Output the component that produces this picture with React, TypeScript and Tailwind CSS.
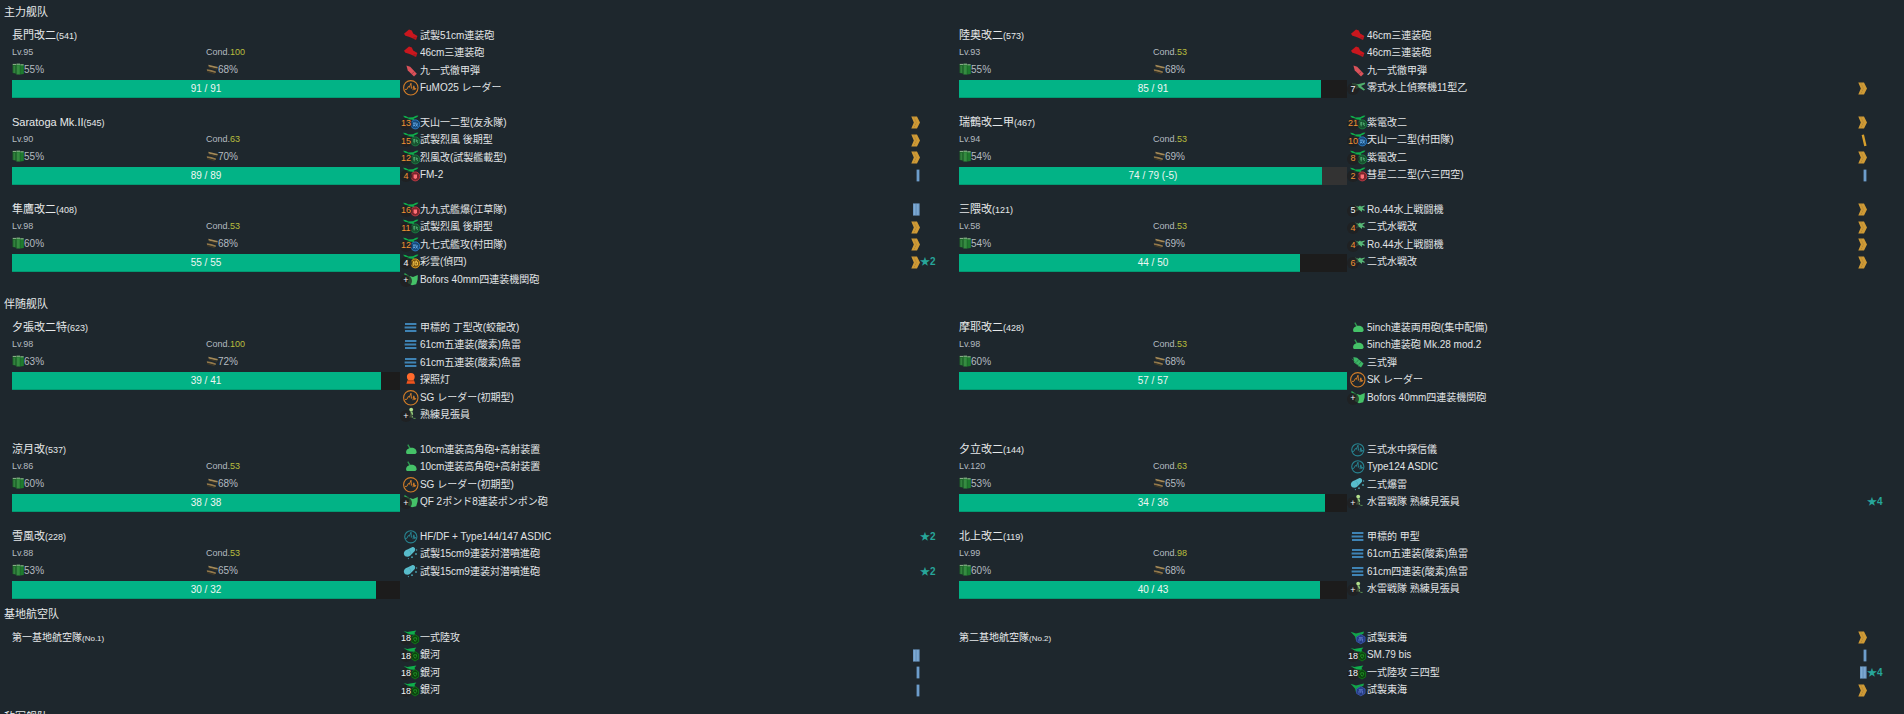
import React from 'react';

type IconKind =
  | 'gun' | 'shell' | 'radar' | 'sonar' | 'torpedo' | 'light' | 'lookout' | 'dome' | 'aa' | 'sanshiki'
  | 'charge' | 'seaplane' | 'seafighter' | 'fighter' | 'attacker' | 'bomber' | 'recon' | 'land' | 'patrol';

type Prof = 'chevron' | 'slash' | 'one' | 'two';

interface Equip {
  icon: IconKind;
  name: string;
  badge?: string;
  low?: boolean;
  prof?: Prof;
  stars?: number;
}

interface Ship {
  name: string;
  id: string;
  lv: number;
  cond: number;
  fuel: number;
  ammo: number;
  hp: number;
  max: number;
  lost?: number;
  equips: Equip[];
}

const e = (icon: IconKind, name: string, badge?: string, low?: boolean, prof?: Prof, stars?: number): Equip => ({
  icon, name, badge, low, prof, stars,
});

const mainFleet: Ship[] = [
  {
    name: '長門改二', id: '541', lv: 95, cond: 100, fuel: 55, ammo: 68, hp: 91, max: 91,
    equips: [e('gun', '試製51cm連装砲'), e('gun', '46cm三連装砲'), e('shell', '九一式徹甲弾'), e('radar', 'FuMO25 レーダー')],
  },
  {
    name: '陸奥改二', id: '573', lv: 93, cond: 53, fuel: 55, ammo: 68, hp: 85, max: 91,
    equips: [e('gun', '46cm三連装砲'), e('gun', '46cm三連装砲'), e('shell', '九一式徹甲弾'), e('seaplane', '零式水上偵察機11型乙', '7', false, 'chevron')],
  },
  {
    name: 'Saratoga Mk.II', id: '545', lv: 90, cond: 63, fuel: 55, ammo: 70, hp: 89, max: 89,
    equips: [
      e('attacker', '天山一二型(友永隊)', '13', true, 'chevron'),
      e('fighter', '試製烈風 後期型', '15', true, 'chevron'),
      e('fighter', '烈風改(試製艦載型)', '12', true, 'chevron'),
      e('bomber', 'FM-2', '4', true, 'one'),
    ],
  },
  {
    name: '瑞鶴改二甲', id: '467', lv: 94, cond: 53, fuel: 54, ammo: 69, hp: 74, max: 79, lost: 5,
    equips: [
      e('fighter', '紫電改二', '21', true, 'chevron'),
      e('attacker', '天山一二型(村田隊)', '10', true, 'slash'),
      e('fighter', '紫電改二', '8', true, 'chevron'),
      e('bomber', '彗星二二型(六三四空)', '2', true, 'one'),
    ],
  },
  {
    name: '隼鷹改二', id: '408', lv: 98, cond: 53, fuel: 60, ammo: 68, hp: 55, max: 55,
    equips: [
      e('bomber', '九九式艦爆(江草隊)', '16', true, 'two'),
      e('fighter', '試製烈風 後期型', '11', true, 'chevron'),
      e('attacker', '九七式艦攻(村田隊)', '12', true, 'chevron'),
      e('recon', '彩雲(偵四)', '4', false, 'chevron', 2),
      e('aa', 'Bofors 40mm四連装機関砲', '+'),
    ],
  },
  {
    name: '三隈改', id: '121', lv: 58, cond: 53, fuel: 54, ammo: 69, hp: 44, max: 50,
    equips: [
      e('seafighter', 'Ro.44水上戦闘機', '5', false, 'chevron'),
      e('seafighter', '二式水戦改', '4', true, 'chevron'),
      e('seafighter', 'Ro.44水上戦闘機', '4', true, 'chevron'),
      e('seafighter', '二式水戦改', '6', true, 'chevron'),
    ],
  },
];

const escortFleet: Ship[] = [
  {
    name: '夕張改二特', id: '623', lv: 98, cond: 100, fuel: 63, ammo: 72, hp: 39, max: 41,
    equips: [
      e('torpedo', '甲標的 丁型改(蛟龍改)'),
      e('torpedo', '61cm五連装(酸素)魚雷'),
      e('torpedo', '61cm五連装(酸素)魚雷'),
      e('light', '探照灯'),
      e('radar', 'SG レーダー(初期型)'),
      e('lookout', '熟練見張員', '+'),
    ],
  },
  {
    name: '摩耶改二', id: '428', lv: 98, cond: 53, fuel: 60, ammo: 68, hp: 57, max: 57,
    equips: [
      e('dome', '5inch連装両用砲(集中配備)'),
      e('dome', '5inch連装砲 Mk.28 mod.2'),
      e('sanshiki', '三式弾'),
      e('radar', 'SK レーダー'),
      e('aa', 'Bofors 40mm四連装機関砲', '+'),
    ],
  },
  {
    name: '涼月改', id: '537', lv: 86, cond: 53, fuel: 60, ammo: 68, hp: 38, max: 38,
    equips: [
      e('dome', '10cm連装高角砲+高射装置'),
      e('dome', '10cm連装高角砲+高射装置'),
      e('radar', 'SG レーダー(初期型)'),
      e('aa', 'QF 2ポンド8連装ポンポン砲', '+'),
    ],
  },
  {
    name: '夕立改二', id: '144', lv: 120, cond: 63, fuel: 53, ammo: 65, hp: 34, max: 36,
    equips: [
      e('sonar', '三式水中探信儀'),
      e('sonar', 'Type124 ASDIC'),
      e('charge', '二式爆雷'),
      e('lookout', '水雷戦隊 熟練見張員', '+', false, undefined, 4),
    ],
  },
  {
    name: '雪風改', id: '228', lv: 88, cond: 53, fuel: 53, ammo: 65, hp: 30, max: 32,
    equips: [
      e('sonar', 'HF/DF + Type144/147 ASDIC', undefined, false, undefined, 2),
      e('charge', '試製15cm9連装対潜噴進砲'),
      e('charge', '試製15cm9連装対潜噴進砲', undefined, false, undefined, 2),
    ],
  },
  {
    name: '北上改二', id: '119', lv: 99, cond: 98, fuel: 60, ammo: 68, hp: 40, max: 43,
    equips: [
      e('torpedo', '甲標的 甲型'),
      e('torpedo', '61cm五連装(酸素)魚雷'),
      e('torpedo', '61cm四連装(酸素)魚雷'),
      e('lookout', '水雷戦隊 熟練見張員', '+'),
    ],
  },
];

const airbases = [
  {
    name: '第一基地航空隊', id: 'No.1',
    equips: [
      e('land', '一式陸攻', '18'),
      e('land', '銀河', '18', false, 'two'),
      e('land', '銀河', '18', false, 'one'),
      e('land', '銀河', '18', false, 'one'),
    ],
  },
  {
    name: '第二基地航空隊', id: 'No.2',
    equips: [
      e('patrol', '試製東海', undefined, false, 'chevron'),
      e('land', 'SM.79 bis', '18', false, 'one'),
      e('land', '一式陸攻 三四型', '18', false, 'two', 4),
      e('patrol', '試製東海', undefined, false, 'chevron'),
    ],
  },
];

const Plane = () => (
  <path d="M1 1.8 L3.6 2 L6.4 3.4 L11 3.2 L14 1.8 L16.4 1.6 L15.4 3 L11.6 4.8 L12.4 6.2 L9 5.6 L5 6.6 L5.8 4.8 L2.6 3.4 Z" fill="#0fae4c" />
);

const Disc = ({ ring, fill, mark }: { ring: string; fill: string; mark: React.ReactNode }) => (
  <>
    <Plane />
    <circle cx="13.3" cy="10.4" r="4.5" fill={fill} stroke={ring} strokeWidth="0.9" />
    {mark}
  </>
);

const Scope = ({ color, r }: { color: string; r: number }) => (
  <g fill="none" stroke={color}>
    <circle cx="8.8" cy="8.8" r={r} strokeWidth="1.1" />
    <path d="M3 10.4 H4.8 L6.4 7.4 L7.2 8.4 L9 4.2 L9.4 9.4 L10 8.6 M11 11.2 L11.8 6.8 L12.8 10.8 L13.4 9.2 L14.2 10" strokeWidth="1" strokeLinejoin="bevel" />
  </g>
);

function drawing(kind: IconKind) {
  switch (kind) {
    case 'gun':
      return (
        <>
          <path d="M2 6.8 L7 2.6 L9.8 3.4 L11.2 6.6 L15.4 9 L14 13 L9.4 10.8 L6 9.6 L3.4 8.8 Z" fill="#c9171e" />
          <path d="M11.6 10.4 L15 11 M11 11.2 L14.2 12.6" stroke="#7d1a20" strokeWidth="0.5" />
        </>
      );
    case 'shell':
      return (
        <>
          <path d="M4.4 3.4 L8.2 4.8 L14.8 11.8 L12 14.6 L5.8 8.4 Z" fill="#d9525a" />
          <path d="M10 11.8 L12.4 9.4" stroke="#8f2f37" strokeWidth="0.7" />
        </>
      );
    case 'radar':
      return <Scope color="#d07c28" r={7.2} />;
    case 'sonar':
      return <Scope color="#27828f" r={6.1} />;
    case 'torpedo':
      return <path d="M3 5 H14.4 M2.6 8.5 H14.2 M3 12 H14.4" stroke="#3f83b4" strokeWidth="1.9" fill="none" />;
    case 'light':
      return (
        <>
          <circle cx="8.8" cy="5.8" r="3.9" fill="#ff6a2c" />
          <path d="M5.6 9.2 H12 L13.2 12.8 H4.4 Z" fill="#f2551d" />
          <path d="M6 9.9 H11.6" stroke="#8f3a1c" strokeWidth="0.6" />
        </>
      );
    case 'lookout':
      return (
        <>
          <circle cx="9.2" cy="3.6" r="1.9" fill="#b4e08c" />
          <path d="M8.2 5.6 H10.4 L11.2 8.2 L10 9.4 L11.4 11.6 H7 L8.2 8.8 Z" fill="#8fc878" />
          <path d="M11.4 12.4 H13.6" stroke="#5a8f52" strokeWidth="1" />
        </>
      );
    case 'dome':
      return (
        <>
          <path d="M5.8 3.6 L8 7.4" stroke="#2f9a50" strokeWidth="1.3" />
          <path d="M4.2 12 C3.6 9.6 5.6 7.2 9 6.8 C12.4 6.6 14.8 8.6 14.6 11.8 L13.4 13 H4.8 Z" fill="#45c268" />
        </>
      );
    case 'aa':
      return (
        <>
          <path d="M2.4 2.6 L9 7" stroke="#2fa653" strokeWidth="1.5" />
          <path d="M7.8 5 L11 6 L15.8 4 L15.6 8.6 L14.2 13.2 L10 14.2 L5.6 12 L7.2 8.6 Z" fill="#45c268" />
        </>
      );
    case 'sanshiki':
      return (
        <>
          <path d="M4.4 3 L8 3.8 L14.6 9.6 L12 13.6 L5 8.6 Z" fill="#3cb566" />
          <path d="M3 4.8 L10.6 13.2" stroke="#2c7f48" strokeWidth="1" strokeDasharray="1.4 1" />
          <path d="M7.4 8.4 L9.6 5.6 M9.8 10.6 L12 7.8" stroke="#23633a" strokeWidth="0.6" />
        </>
      );
    case 'charge':
      return (
        <>
          <path d="M2 9.4 C1.4 6.8 3.8 5 5.4 4.6 L10 2.2 C12.4 1.6 14 4.2 12.8 6 L8.4 10.4 C6.2 12.4 2.8 12 2 9.4 Z" fill="#58bccb" />
          <path d="M6.4 4.8 C7.8 5.4 9 7 8.6 9.4" stroke="#3c93a3" strokeWidth="0.4" fill="none" />
          <g fill="#4aa3b3">
            <circle cx="14.6" cy="5" r="0.7" />
            <circle cx="14" cy="9" r="0.9" />
            <circle cx="10" cy="12.2" r="0.9" />
            <circle cx="6.4" cy="13.6" r="0.6" />
          </g>
        </>
      );
    case 'seaplane':
      return (
        <path d="M3 4 L9 5.2 L15.8 3.6 L16.2 5 L12 7 L16.2 10.8 L14.6 11.6 L10 8.6 L6.6 10.2 L7.4 7.2 L3 5.6 Z" fill="#4fae6c" />
      );
    case 'seafighter':
      return (
        <path d="M6 4.4 L9.4 5.8 L11 4.4 L12 5.4 L15.8 4.4 L15.6 5.6 L13.2 7 L16 9 L15.4 9.8 L13 9 L13 11 L10.4 9 L6.6 10.6 L8 7.6 Z" fill="#57b877" />
      );
    case 'fighter':
      return (
        <Disc ring="#1b7f43" fill="#17512f" mark={<path d="M11.4 8.4 H13 M11 10 H13.4 M12.2 8 V12.4 M14 8.2 L15.6 12 M14 10.4 L15.8 9.4" stroke="#55b878" strokeWidth="0.8" />} />
      );
    case 'attacker':
      return (
        <Disc ring="#2f7fcb" fill="#154a7c" mark={<path d="M11 9 H13 M12 9 V12 M11 12 L13 11.4 M14.2 8 L13.6 9.8 H16 M15.4 9.8 L13.6 12.6 M14 10.4 L15.8 12.6" stroke="#6db4f0" strokeWidth="0.8" />} />
      );
    case 'bomber':
      return (
        <Disc ring="#c63a45" fill="#7a252c" mark={<path d="M11.6 8.4 H15 V12 L13.4 13 L11.6 12 Z" fill="#ff7078" />} />
      );
    case 'recon':
      return (
        <Disc ring="#f0a81e" fill="#7c5510" mark={<path d="M12 8 L11.2 10 V13 M13 9 H15.4 V12 H13 Z M14.2 7.4 V9" stroke="#ffd052" strokeWidth="0.9" fill="none" />} />
      );
    case 'land':
      return (
        <>
          <path d="M1.6 2 L5.4 3 L8 2.6 L14.4 1.4 L12.6 3.8 L13.2 5.8 L8.4 5.4 L4.6 6.6 L5.4 4.6 Z" fill="#0fae4c" />
          <path d="M13 5.6 L16.6 8 V12.8 L13 15 L9.6 12.8 V8 Z" fill="#0c420f" stroke="#0f7a16" strokeWidth="0.9" />
          <path d="M11.8 8.8 H14.6 V10.6 L13.2 12.4 L11.8 10.6 Z" fill="none" stroke="#23a02a" strokeWidth="0.8" />
        </>
      );
    case 'patrol':
      return (
        <>
          <path d="M1.6 2.8 L7 4.6 L15 2.4 L14.4 4.8 L10 7 L7 11.4 L6 7.6 Z" fill="#12a44b" />
          <path d="M11.8 5.6 L16 8 V12.4 L11.8 14.8 L7.6 12.4 V8 Z" fill="#243a80" stroke="#3a55ad" strokeWidth="0.9" />
          <path d="M9.8 8.4 H13.8 M10 12.6 V9.8 H13.6 V12.6 M11.8 9.8 V12" stroke="#6a86dd" strokeWidth="0.7" fill="none" />
        </>
      );
  }
}

const EquipIcon = ({ item }: { item: Equip }) => (
  <span className="relative flex w-[18px] shrink-0 items-center justify-center">
    <svg viewBox="0 0 18 18" className="size-[18px] shrink-0" aria-hidden="true">
      {drawing(item.icon)}
    </svg>
    {item.badge && (
      <span
        className={
          'absolute top-1 -left-0.5 flex size-3 items-center justify-center rounded-full bg-[#202020]/75 text-[9px] leading-none ' +
          (item.low ? 'text-[#f09334]' : 'text-[#f2f4f5]')
        }
      >
        {item.badge}
      </span>
    )}
  </span>
);

const ProfMark = ({ kind }: { kind?: Prof }) => (
  <span className="flex w-[9px] shrink-0 items-center">
    {kind && (
      <svg viewBox="0 0 9 13" className="h-[13px] w-[9px]" aria-hidden="true">
        {kind === 'chevron' && (
          <>
            <path d="M0.3 0.4 H6 L9 6.5 L6 12.6 H0.3 L2.8 6.5 Z" fill="#cf9a35" />
            <path d="M2.8 1 L5.4 6.5 L2.8 12" fill="none" stroke="#a07a36" strokeWidth="0.6" strokeDasharray="1.6 0.8" />
          </>
        )}
        {kind === 'slash' && <path d="M4.8 0.8 L7.4 12" stroke="#d8a02c" strokeWidth="2.4" fill="none" />}
        {kind === 'one' && <path d="M7 0.6 V12.4" stroke="#6d9dcb" strokeWidth="2.8" fill="none" />}
        {kind === 'two' && (
          <>
            <path d="M2 0.4 H8.6 V12.6 H2 Z" fill="#6b98c4" />
            <path d="M3.6 1 V12 M6.8 1 V12" stroke="#7fabd3" strokeWidth="1.2" fill="none" />
          </>
        )}
      </svg>
    )}
  </span>
);

const EquipList = ({ items }: { items: Equip[] }) => (
  <ul className="py-px pl-0.5 pr-1.5">
    {items.map((item, i) => (
      <li key={i} className="flex h-[17px] items-center text-[10px] leading-[17px] text-[#e1e4e6] even:h-[18px] even:leading-[18px]">
        <EquipIcon item={item} />
        <span className="min-w-0 flex-1 truncate">{item.name}</span>
        <ProfMark kind={item.prof} />
        <span className="w-[17px] shrink-0 whitespace-nowrap font-bold text-[#27a59a]">{item.stars ? `★${item.stars}` : ''}</span>
      </li>
    ))}
  </ul>
);

const FuelIcon = () => (
  <svg viewBox="0 0 12 12" className="size-3 shrink-0" aria-hidden="true">
    <path d="M0.6 1 H4.4 V10.8 L0.6 10 Z" fill="#1f6b2c" />
    <path d="M4.4 0.8 H8.2 V11.6 H4.4 Z" fill="#2b8538" />
    <path d="M8.2 1.4 H11.8 V11 L8.2 11.6 Z" fill="#1e7a2e" />
    <path d="M0.8 1.4 H4.2 M4.6 1.2 H8 M8.4 1.8 H11.6" stroke="#93b391" strokeWidth="1" />
    <path d="M2.2 3 V10 M6 2.8 V11" stroke="#4a9a55" strokeWidth="0.7" />
  </svg>
);

const AmmoIcon = () => (
  <svg viewBox="0 0 12 12" className="size-3 shrink-0" aria-hidden="true">
    <path d="M2.4 1.8 L6.6 2.8 L11.8 4 L11.4 5.6 L6.6 4.6 L2.6 3.4 Z" fill="#a58a58" />
    <path d="M0.8 6.2 L5.4 7 L10 8.4 L9.6 10 L5 8.8 L1 7.8 Z" fill="#94794a" />
    <path d="M3 4.2 L11 6.4 M1.2 8.6 L8.8 10.8" stroke="#4a3c22" strokeWidth="0.8" />
  </svg>
);

const HpBar = ({ hp, max, lost = 0 }: { hp: number; max: number; lost?: number }) => (
  <div className="relative mt-0.5 flex h-[18px] bg-[#1c1c1c]" role="progressbar" aria-valuenow={hp} aria-valuemin={0} aria-valuemax={max}>
    <div className="border-b border-[#029a72] bg-[#02b386]" style={{ width: `${(hp / max) * 100}%` }} />
    {lost > 0 && <div className="bg-[#333333]" style={{ width: `${(lost / max) * 100}%` }} />}
    <span className="absolute inset-0 text-center text-[10px] leading-[17px] text-[#eef6f3]">
      {hp} / {max}
      {lost > 0 && ` (-${lost})`}
    </span>
  </div>
);

const ShipCard = ({ ship }: { ship: Ship }) => (
  <article className="grid grid-cols-[5fr_7fr] items-start">
    <div>
      <h3 className="flex h-[18px] items-baseline text-[11px] leading-[19px] text-[#e6e9ea]">
        {ship.name}
        <small className="text-[9px]">({ship.id})</small>
      </h3>
      <div className="grid grid-cols-2 text-[#b4bbc0]">
        <span className="text-[9px] leading-[16px]">Lv.{ship.lv}</span>
        <span className="text-[9px] leading-[16px]">
          Cond.<span className="text-[#b9bd3d]">{ship.cond}</span>
        </span>
        <span className="flex h-[18px] items-center text-[10px]">
          <FuelIcon />
          {ship.fuel}%
        </span>
        <span className="flex h-[18px] items-center text-[10px]">
          <AmmoIcon />
          {ship.ammo}%
        </span>
      </div>
      <HpBar hp={ship.hp} max={ship.max} lost={ship.lost} />
    </div>
    <EquipList items={ship.equips} />
  </article>
);

const Section = ({ title, children }: { title: string; children?: React.ReactNode }) => (
  <section className="pb-[3px]">
    <h2 className="mb-0.5 px-1 font-['Liberation_Sans','Noto_Sans_CJK_SC',sans-serif] text-[11px] leading-6 text-[#e6e9ea]" lang="zh-CN">
      {title}
    </h2>
    <div className="grid grid-cols-2 gap-x-4 gap-y-[15px] pl-3 pr-3.5">{children}</div>
  </section>
);

export default function App() {
  return (
    <main
      lang="ja"
      className="h-screen overflow-hidden bg-[#1e272d] font-['Liberation_Sans','Noto_Sans_CJK_JP',sans-serif]"
    >
      <Section title="主力舰队">
        {mainFleet.map((ship) => (
          <ShipCard key={ship.id} ship={ship} />
        ))}
      </Section>
      <Section title="伴随舰队">
        {escortFleet.map((ship) => (
          <ShipCard key={ship.id} ship={ship} />
        ))}
      </Section>
      <Section title="基地航空队">
        {airbases.map((base) => (
          <article key={base.id} className="grid grid-cols-[5fr_7fr] items-start pb-0.5">
            <h3 className="flex items-baseline text-[10px] leading-5 text-[#e6e9ea]">
              {base.name}
              <small className="text-[8px]">({base.id})</small>
            </h3>
            <EquipList items={base.equips} />
          </article>
        ))}
      </Section>
      <Section title="敌军舰队" />
    </main>
  );
}
